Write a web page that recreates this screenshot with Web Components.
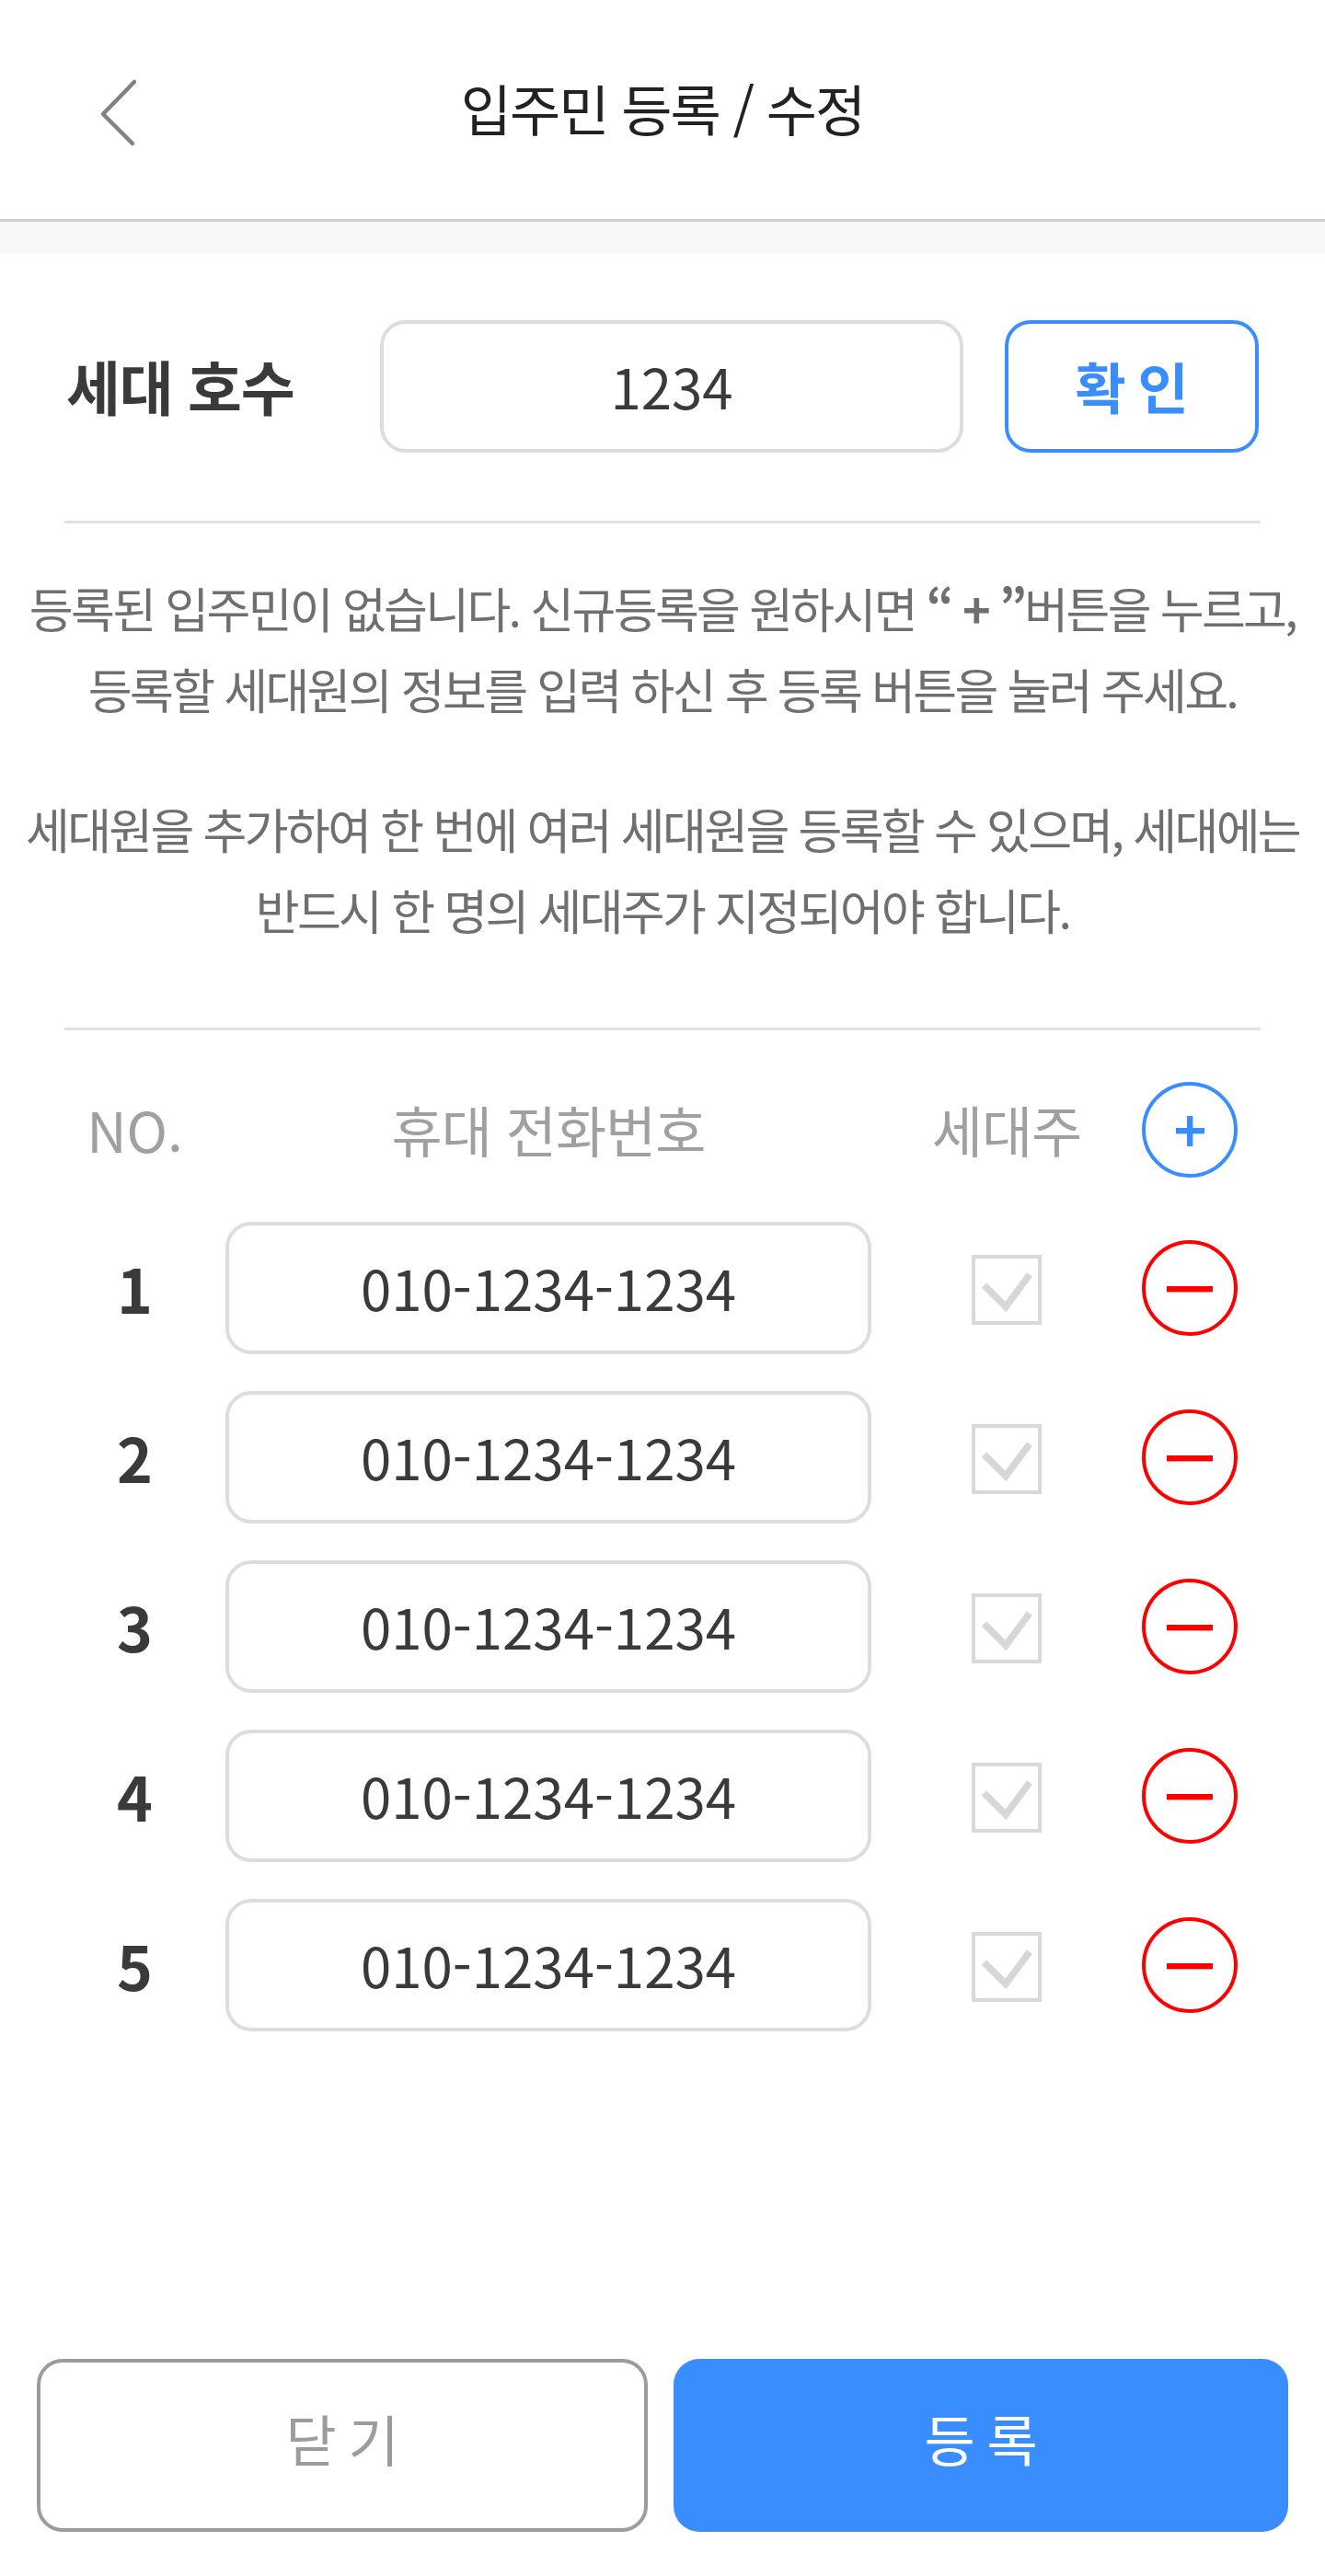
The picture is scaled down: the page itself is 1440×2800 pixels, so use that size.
<!DOCTYPE html>
<html lang="ko">
<head>
<meta charset="utf-8">
<title>입주민 등록 / 수정</title>
<style>
  html, body { margin: 0; background: #fff; }
  body { font-family: "Noto Sans CJK KR", "Noto Sans", sans-serif; color: #3a3a3a; }
</style>
</head>
<body>
<resident-page>
  <app-header slot="header">입주민 등록 / 수정</app-header>

  <unit-search label="세대 호수" value="1234"></unit-search>

  <notice-text>
    <p>등록된 입주민이 없습니다. 신규등록을 원하시면 <b>“ + ”</b>버튼을 누르고,<br>등록할 세대원의 정보를 입력 하신 후 등록 버튼을 눌러 주세요.</p>
    <p>세대원을 추가하여 한 번에 여러 세대원을 등록할 수 있으며, 세대에는<br>반드시 한 명의 세대주가 지정되어야 합니다.</p>
  </notice-text>

  <member-table>
    <member-row no="1" phone="010-1234-1234"></member-row>
    <member-row no="2" phone="010-1234-1234"></member-row>
    <member-row no="3" phone="010-1234-1234"></member-row>
    <member-row no="4" phone="010-1234-1234"></member-row>
    <member-row no="5" phone="010-1234-1234"></member-row>
  </member-table>

  <bottom-actions slot="footer"></bottom-actions>
</resident-page>

<script>
// page frame: header on top, actions pinned to the bottom
class ResidentPage extends HTMLElement {
  constructor() {
    super()
    this.attachShadow({ mode: 'open' }).innerHTML = `
      <style>
        :host { display: flex; flex-direction: column; min-height: 2800px; background: #fff; }
        main { flex: 1; padding: 72px 70px 0; }
        footer { padding: 0 40px 48px; }
      </style>
      <slot name="header"></slot>
      <main><slot></slot></main>
      <footer><slot name="footer"></slot></footer>
    `
  }
}

class AppHeader extends HTMLElement {
  constructor() {
    super()
    this.attachShadow({ mode: 'open' }).innerHTML = `
      <style>
        :host { display: block; }
        .bar {
          height: 238px;
          display: flex;
          align-items: center;
          justify-content: center;
          position: relative;
          border-bottom: 3px solid #cfcfcf;
        }
        .back { position: absolute; left: 106px; top: 84px; width: 46px; height: 78px; }
        h1 { margin: 0 0 4px; font-size: 60px; font-weight: 400; color: #222; letter-spacing: -2px; line-height: 1; }
        .band { height: 35px; background: #f7f7f7; }
      </style>
      <div class="bar">
        <svg class="back" viewBox="0 0 46 78" fill="none" stroke="#808285" stroke-width="4.5" stroke-linecap="round" stroke-linejoin="round">
          <polyline points="40,5 6,40 38,72"></polyline>
        </svg>
        <h1><slot></slot></h1>
      </div>
      <div class="band"></div>
    `
  }
}

class UnitSearch extends HTMLElement {
  constructor() {
    super()
    this.attachShadow({ mode: 'open' }).innerHTML = `
      <style>
        :host { display: block; padding-bottom: 74px; border-bottom: 3px solid #e2e2e2; }
        .row { display: grid; grid-template-columns: 343px 634px 276px; align-items: center; }
        .label { font-size: 64px; font-weight: 700; color: #3a3a3a; padding: 0 0 4px 2px; line-height: 1; letter-spacing: -1.2px; }
        .field, .ok {
          box-sizing: border-box;
          height: 144px;
          padding-bottom: 4px;
          border-radius: 28px;
          display: flex;
          align-items: center;
          justify-content: center;
        }
        .field { border: 4px solid #dddddd; font-size: 60px; color: #3a3a3a; }
        .ok { border: 4px solid #3a8dff; color: #3a8dff; font-size: 60px; font-weight: 700; margin-left: 45px; width: 276px; word-spacing: -4px; }
      </style>
      <div class="row">
        <div class="label"></div>
        <div class="field"></div>
        <div class="ok">확 인</div>
      </div>
    `
    this.shadowRoot.querySelector('.label').textContent = this.getAttribute('label')
    this.shadowRoot.querySelector('.field').textContent = this.getAttribute('value')
  }
}

class NoticeText extends HTMLElement {
  constructor() {
    super()
    this.attachShadow({ mode: 'open' }).innerHTML = `
      <style>
        :host { display: block; margin: 0 -70px; text-align: center; font-size: 52px; line-height: 88px; color: #6f6f6f; letter-spacing: -2.66px; white-space: nowrap; }
        .wrap { padding: 48px 0 84px; }
        ::slotted(p) { margin: 0 0 64px; }
        ::slotted(p:last-child) { margin-bottom: 0; }
      </style>
      <div class="wrap"><slot></slot></div>
    `
  }
}

class MemberTable extends HTMLElement {
  constructor() {
    super()
    this.attachShadow({ mode: 'open' }).innerHTML = `
      <style>
        :host { display: block; border-top: 3px solid #e2e2e2; padding-top: 56px; }
        .head {
          display: grid;
          grid-template-columns: 175px 702px 294px 1fr;
          align-items: center;
          height: 104px;
          font-size: 60px;
          color: #a0a0a0;
          text-align: center;
          letter-spacing: -1px;
          white-space: nowrap;
          margin-bottom: 48px;
        }
        .head > div { padding-bottom: 4px; }
        .no { padding-right: 22px; letter-spacing: 0; }
        .add { justify-self: end; margin-right: 26px; }
        .list { display: flex; flex-direction: column; gap: 40px; }
      </style>
      <div class="head">
        <div class="no">NO.</div>
        <div>휴대 전화번호</div>
        <div>세대주</div>
        <round-button class="add" kind="add"></round-button>
      </div>
      <div class="list"><slot></slot></div>
    `
  }
}

class MemberRow extends HTMLElement {
  constructor() {
    super()
    this.attachShadow({ mode: 'open' }).innerHTML = `
      <style>
        :host { display: grid; grid-template-columns: 175px 702px 294px 1fr; align-items: center; height: 144px; }
        .no { font-size: 66px; font-weight: 700; color: #3a3a3a; text-align: center; padding: 0 22px 2px 0; }
        .phone {
          box-sizing: border-box;
          height: 144px;
          padding-bottom: 4px;
          border: 4px solid #dddddd;
          border-radius: 28px;
          display: flex;
          align-items: center;
          justify-content: center;
          font-size: 60px;
          color: #3a3a3a;
        }
        .check { justify-self: center; width: 76px; height: 76px; display: block; margin-top: 4px; }
        round-button { justify-self: end; margin-right: 26px; }
      </style>
      <div class="no"></div>
      <div class="phone"></div>
      <svg class="check" viewBox="0 0 76 76">
        <rect x="2" y="2" width="72" height="72" fill="#fff" stroke="#d9d9d9" stroke-width="4"></rect>
        <polyline points="13.5,33 37,56.5 63,21.5" fill="none" stroke="#d5d7d8" stroke-width="7.5"></polyline>
      </svg>
      <round-button kind="remove"></round-button>
    `
    this.shadowRoot.querySelector('.no').textContent = this.getAttribute('no')
    this.shadowRoot.querySelector('.phone').textContent = this.getAttribute('phone')
  }
}

class RoundButton extends HTMLElement {
  constructor() {
    super()
    const add = this.getAttribute('kind') === 'add'
    const color = add ? '#3a8dff' : '#ff0000'
    const mark = add
      ? `<rect x="37" y="50" width="31" height="6.4"></rect><rect x="49" y="37" width="6.4" height="33"></rect>`
      : `<rect x="27" y="50" width="50" height="6.4"></rect>`
    this.attachShadow({ mode: 'open' }).innerHTML = `
      <style>
        :host { display: block; width: 104px; height: 104px; }
        svg { display: block; }
      </style>
      <svg width="104" height="104" viewBox="0 0 104 104">
        <circle cx="52" cy="52" r="50" fill="#fff" stroke="${color}" stroke-width="4"></circle>
        <g fill="${color}">${mark}</g>
      </svg>
    `
  }
}

class BottomActions extends HTMLElement {
  constructor() {
    super()
    this.attachShadow({ mode: 'open' }).innerHTML = `
      <style>
        :host { display: grid; grid-template-columns: 664px 668px; column-gap: 28px; }
        div {
          box-sizing: border-box;
          height: 188px;
          padding-bottom: 18px;
          border-radius: 28px;
          display: flex;
          align-items: center;
          justify-content: center;
          font-size: 60px;
          word-spacing: -4px;
        }
        .close { border: 4px solid #9c9c9c; color: #9c9c9c; }
        .save { background: #3a8dff; color: #fff; }
      </style>
      <div class="close">닫 기</div>
      <div class="save">등 록</div>
    `
  }
}

customElements.define('round-button', RoundButton)
customElements.define('resident-page', ResidentPage)
customElements.define('app-header', AppHeader)
customElements.define('unit-search', UnitSearch)
customElements.define('notice-text', NoticeText)
customElements.define('member-table', MemberTable)
customElements.define('member-row', MemberRow)
customElements.define('bottom-actions', BottomActions)
</script>
</body>
</html>
